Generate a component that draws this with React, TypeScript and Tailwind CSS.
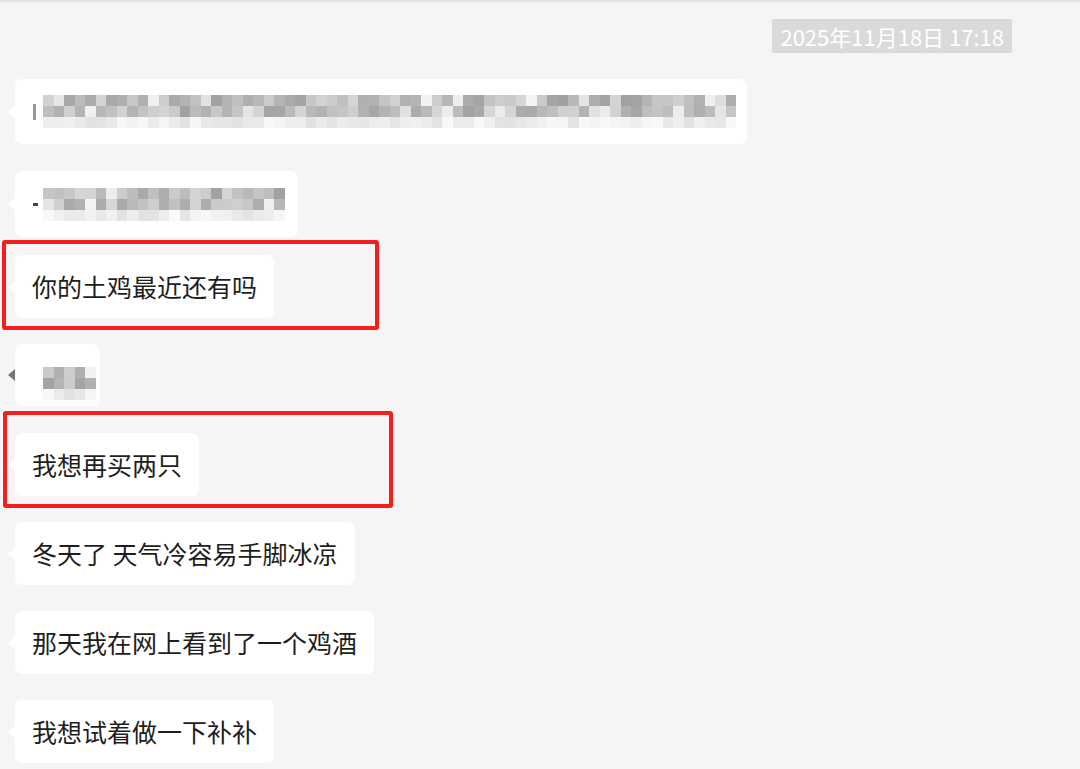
import type { ReactNode } from 'react'

const cjk = "font-['Noto_Sans_CJK_SC','Noto_Sans',sans-serif]"

// deterministic gray mosaic used for the blurred messages
function Mosaic({ cols, seed, light = 2 }: { cols: number; seed: number; light?: number }) {
  let s = seed
  const rnd = () => {
    s = (s * 9301 + 49297) % 233280
    return s / 233280
  }
  const rows: string[][] = []
  for (let r = 0; r < 3; r++) {
    const row: string[] = []
    for (let c = 0; c < cols; c++) {
      let v: number
      if (r < light) {
        const gap = rnd() < 0.1
        v = gap ? 222 + Math.floor(rnd() * 22) : 160 + Math.floor(rnd() * 55)
      } else {
        v = 226 + Math.floor(rnd() * 24)
      }
      row.push(`rgb(${v},${v},${v})`)
    }
    rows.push(row)
  }
  return (
    <div className="flex flex-col">
      {rows.map((row, i) => (
        <div key={i} className="flex">
          {row.map((c, j) => (
            <div key={j} className="w-[10.5px] h-[11px]" style={{ background: c }} />
          ))}
        </div>
      ))}
    </div>
  )
}

function Bubble({ children, className = '', tail = 'bg' }: { children: ReactNode; className?: string; tail?: 'bg' | 'dark' }) {
  return (
    <div className={`relative self-start bg-white rounded-[7px] flex items-center ${className}`}>
      <div
        className={`absolute -left-[7px] top-1/2 -translate-y-1/2 w-0 h-0 border-y-[6px] border-y-transparent border-r-[7px] ${tail === 'dark' ? 'border-r-[#777]' : 'border-r-white'}`}
      />
      {children}
    </div>
  )
}

function TextBubble({ text, className = '' }: { text: string; className?: string }) {
  return (
    <Bubble className={`h-[63px] px-[17px] ${className}`}>
      <span className={`${cjk} text-[25px] leading-none text-[#1e1e1e] whitespace-pre`}>{text}</span>
    </Bubble>
  )
}

export default function App() {
  return (
    <div className={`w-[1080px] h-[769px] overflow-hidden bg-[#f5f5f5] border-t-2 border-[#e3e3e3] ${cjk}`}>
      {/* time */}
      <div className="flex justify-end pr-[68px] pt-[17px]">
        <div className="bg-[#dadada] rounded-[2px] h-[34px] px-[8px] flex items-center">
          <span className="text-white text-[22px] leading-none">2025年11月18日 17:18</span>
        </div>
      </div>

      <div className="flex flex-col pl-[15px]">
        <Bubble className="mt-[26px] h-[65px] w-[732px] pl-[18px]">
          <div className="w-[3px] h-[16px] bg-[#555] mr-[7px] opacity-60" />
          <Mosaic cols={66} seed={17} />
        </Bubble>

        <Bubble className="mt-[27px] h-[66px] w-[283px] pl-[18px]">
          <div className="w-[5px] h-[3px] bg-[#444] mr-[5px]" />
          <Mosaic cols={23} seed={311} />
        </Bubble>

        <div className="relative self-start mt-[18px]">
          <div className="absolute -left-[13px] -top-[15px] w-[377px] h-[90px] border-4 border-[#f41f1b] rounded-[3px]" />
          <TextBubble text="你的土鸡最近还有吗" />
        </div>

        <Bubble className="mt-[26px] h-[62px] w-[85px] pl-[28px] pt-[16px]" tail="dark">
          <Mosaic cols={5} seed={91} light={2} />
        </Bubble>

        <div className="relative self-start mt-[27px]">
          <div className="absolute -left-[12px] -top-[22px] w-[390px] h-[97px] border-4 border-[#f41f1b] rounded-[3px]" />
          <TextBubble text="我想再买两只" />
        </div>

        <TextBubble className="mt-[26px]" text="冬天了 天气冷容易手脚冰凉" />
        <TextBubble className="mt-[26px]" text="那天我在网上看到了一个鸡酒" />
        <TextBubble className="mt-[26px]" text="我想试着做一下补补" />
      </div>
    </div>
  )
}
